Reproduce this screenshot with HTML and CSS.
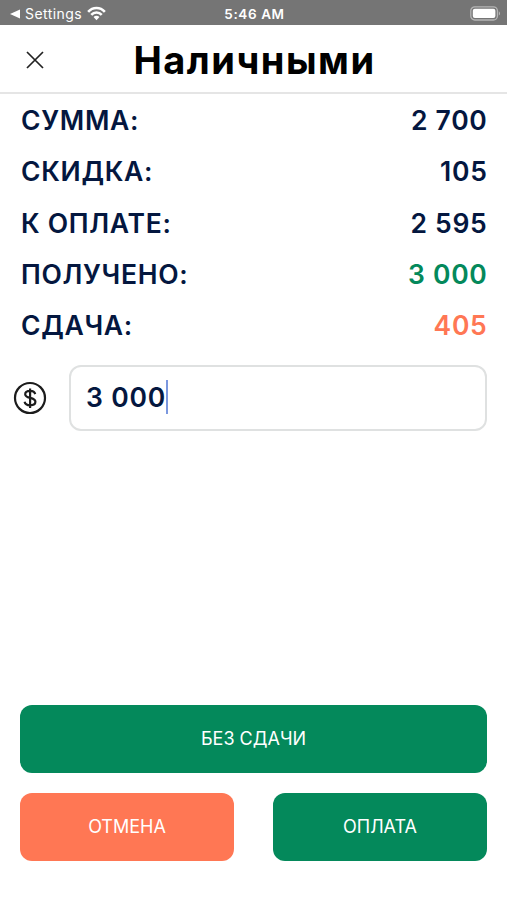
FILE: index.html
```html
<!DOCTYPE html>
<html lang="ru">
<head>
    <meta charset="UTF-8">
    <meta name="viewport" content="width=device-width, initial-scale=1.0">
    <title>Наличными</title>
    <link rel="stylesheet" href="styles.css">
</head>
<body>

<!-- Status bar -->
<div class="status-bar">
    <div class="status-left">
        <svg class="back-icon" width="10" height="10" viewBox="0 0 10 10"><path d="M0 5L10 0.5V9.5Z" fill="#fff"/></svg>
        <span class="status-app">Settings</span>
        <svg class="wifi-icon" width="19" height="15" viewBox="0 0 20 15">
            <g fill="none" stroke="#fff" stroke-width="2.7">
                <path d="M1.2 5.7C6 0.3 14 0.3 18.8 5.7"/>
                <path d="M4.5 9C7.5 5.6 12.5 5.6 15.5 9"/>
            </g>
            <path d="M10 14.5L6.9 11.2C8.7 9.5 11.3 9.5 13.1 11.2Z" fill="#fff"/>
        </svg>
    </div>
    <span class="status-time">5:46 AM</span>
    <div class="status-right">
        <svg width="31" height="15" viewBox="0 0 31 15">
            <rect x="0.8" y="0.8" width="26.6" height="13.2" rx="4" fill="none" stroke="#b5b5b5" stroke-width="1.3"/>
            <rect x="2.8" y="2.8" width="22.6" height="9.2" rx="2" fill="#fff"/>
            <path d="M28.8 5.2C30.5 6 30.5 8.8 28.8 9.6Z" fill="#b5b5b5"/>
        </svg>
    </div>
</div>

<!-- Header -->
<div class="header">
    <button type="button" class="close-btn" aria-label="Закрыть">
        <svg width="18" height="18" viewBox="0 0 18 18"><path d="M1 1L17 17M17 1L1 17" fill="none" stroke="#222" stroke-width="1.7"/></svg>
    </button>
    <h1>Наличными</h1>
</div>

<!-- Totals -->
<div class="totals">
    <div class="row"><span>СУММА:</span><span>2 700</span></div>
    <div class="row"><span>СКИДКА:</span><span>105</span></div>
    <div class="row"><span>К ОПЛАТЕ:</span><span>2 595</span></div>
    <div class="row"><span>ПОЛУЧЕНО:</span><span class="received">3 000</span></div>
    <div class="row"><span>СДАЧА:</span><span class="change">405</span></div>
</div>

<!-- Amount -->
<div class="amount">
    <svg class="dollar-icon" width="34" height="34" viewBox="0 0 34 34">
        <g fill="none" stroke="#1c1c1c" stroke-width="2.2">
            <circle cx="17" cy="17" r="15"/>
            <path d="M22.2 13.1C21.6 10.9 19.8 9.9 17.2 9.9C14.3 9.9 12.2 11.2 12.2 13.3C12.2 15.5 14 16.2 17.1 16.9C20.5 17.7 22.4 18.5 22.4 20.8C22.4 23 20.2 24.3 17.2 24.3C14.2 24.3 12.1 23 11.6 20.7M17.1 7.4V26.9"/>
        </g>
    </svg>
    <div class="amount-field"><span>3 000</span><span class="caret"></span></div>
</div>

<!-- Buttons -->
<div class="actions">
    <button type="button" class="btn wide">БЕЗ СДАЧИ</button>
    <button type="button" class="btn cancel">ОТМЕНА</button>
    <button type="button" class="btn">ОПЛАТА</button>
</div>

</body>
</html>
```
FILE: styles.css
```css
* {
    box-sizing: border-box;
}

body {
    font-family: Inter, "Liberation Sans", sans-serif;
    margin: 0;
    height: 900px;
    display: flex;
    flex-direction: column;
    background: #fff;
    color: #04173f;
}

svg {
    display: block;
}

.status-bar {
    display: grid;
    grid-template-columns: 1fr auto 1fr;
    align-items: center;
    height: 25px;
    padding: 2px 6px 0 10px;
    background: #757575;
    color: #fff;
    font-size: 14px;
}

.status-left {
    display: flex;
    align-items: center;
}

.status-app {
    margin: 0 5px 0 5px;
    letter-spacing: 0.45px;
}

.status-time {
    margin-right: 2px;
    font-size: 13.5px;
    font-weight: 600;
    letter-spacing: 0.6px;
}

.status-right {
    display: flex;
    justify-content: flex-end;
}

.header {
    display: grid;
    grid-template-columns: 70px 1fr 68px;
    align-items: center;
    height: 69px;
    padding-top: 2px;
    border-bottom: 2px solid #e5e5e5;
}

.header h1 {
    margin: 0;
    color: #000;
    font-size: 38px;
    font-weight: 700;
    letter-spacing: 1.5px;
    text-align: center;
}

.close-btn {
    justify-self: center;
    padding: 0;
    border: none;
    background: none;
}

.totals {
    padding: 0 19.5px 0 21px;
}

.row {
    display: flex;
    justify-content: space-between;
    height: 51.3px;
    line-height: 53px;
    font-size: 26.5px;
    font-weight: 600;
    letter-spacing: 0.7px;
}

.received {
    color: #04895b;
}

.change {
    color: #ff7754;
}

.amount {
    display: flex;
    align-items: center;
    gap: 22px;
    padding: 15px 20px 0 13px;
}

.amount-field {
    flex: 1;
    display: flex;
    align-items: center;
    height: 66px;
    padding: 0 15px 3px;
    border: 2px solid #dfe1e1;
    border-radius: 12px;
    font-size: 26.5px;
    font-weight: 600;
    letter-spacing: 0.8px;
}

.caret {
    width: 2px;
    height: 34px;
    background: #7b98df;
}

.actions {
    display: grid;
    grid-template-columns: 1fr 1fr;
    gap: 20px 39px;
    margin-top: auto;
    padding: 0 20px 39px;
}

.btn {
    height: 68px;
    padding: 0 0 2px;
    border: none;
    border-radius: 12px;
    background: #04895b;
    color: #fff;
    font-family: inherit;
    font-size: 18px;
}

.btn.wide {
    grid-column: span 2;
}

.btn.cancel {
    background: #ff7754;
}
```
